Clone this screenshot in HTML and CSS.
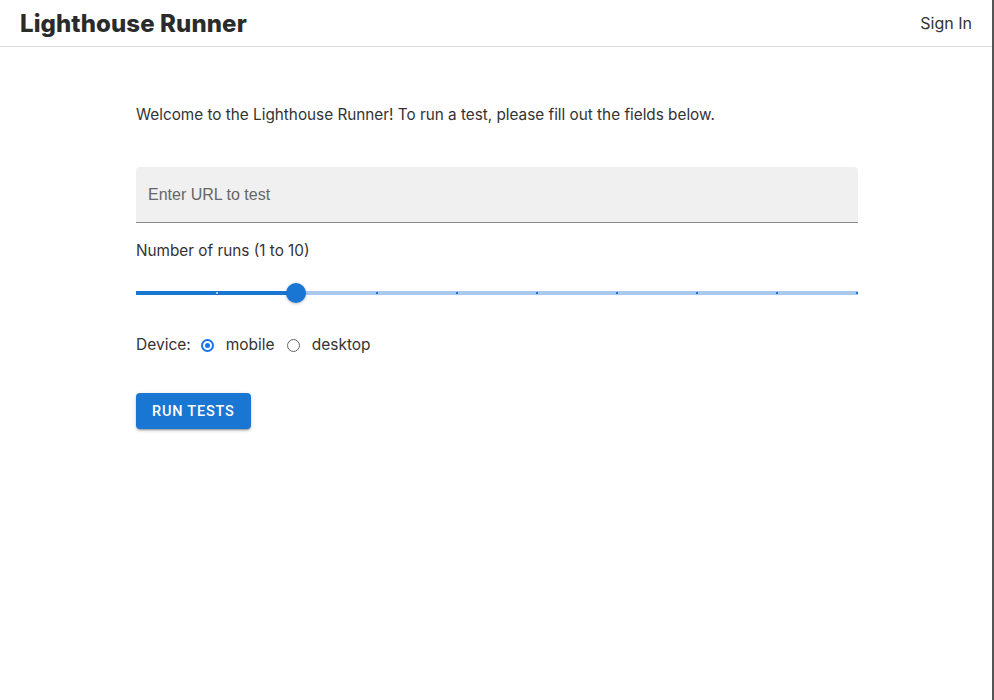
FILE: index.html
```html
<!DOCTYPE html>
<html lang="en">
<head>
<meta charset="utf-8">
<title>Lighthouse Runner</title>
<link rel="stylesheet" href="styles.css">
</head>
<body>
<div class="frame">
  <header class="topbar">
    <h1 class="brand">Lighthouse Runner</h1>
    <a class="signin" href="#">Sign In</a>
  </header>
  <main class="content">
    <p class="intro">Welcome to the Lighthouse Runner! To run a test, please fill out the fields below.</p>
    <div class="field">
      <input class="url-input" type="text" placeholder="Enter URL to test">
    </div>
    <p class="label">Number of runs (1 to 10)</p>
    <div class="slider">
      <div class="rail"></div>
      <div class="track" style="width: 22.22%"></div>
      <div class="ticks">
        <span class="tick on"></span><span class="tick on"></span><span class="tick on"></span><span class="tick"></span><span class="tick"></span><span class="tick"></span><span class="tick"></span><span class="tick"></span><span class="tick"></span><span class="tick"></span>
      </div>
      <div class="thumb" style="left: 22.22%"></div>
    </div>
    <div class="device">
      <span class="device-label">Device:</span>
      <label class="radio"><span class="dot checked"></span>mobile</label>
      <label class="radio"><span class="dot"></span>desktop</label>
    </div>
    <button class="run" type="button">Run Tests</button>
  </main>
</div>
</body>
</html>
```
FILE: styles.css
```css
* { box-sizing: border-box; }
html, body { margin: 0; padding: 0; height: 100%; }
body {
  background: #fff;
  font-family: "Inter", "Lato", sans-serif;
  color: #333;
}
.frame {
  height: 100%;
  border-right: 2px solid #555;
}
.topbar {
  height: 47px;
  border-bottom: 1px solid #dedede;
  display: flex;
  align-items: center;
  justify-content: space-between;
  padding: 0 20px 0 20px;
}
.brand {
  margin: 0;
  font-size: 24px;
  font-weight: 800;
  letter-spacing: 0.1px;
  color: #2b2b2b;
}
.signin {
  font-size: 16px;
  color: #333;
  text-decoration: none;
}
.content {
  width: 722px;
  margin-left: 136px;
  padding-top: 58px;
}
.intro {
  margin: 0;
  font-size: 15.3px;
  line-height: 20px;
  color: #333;
}
.field { margin-top: 42px; }
.url-input {
  width: 100%;
  height: 56px;
  border: none;
  border-bottom: 1px solid #8a8a8a;
  border-radius: 4px 4px 0 0;
  background: #f0f0f0;
  padding: 0 12px;
  font-family: "Liberation Sans", Arial, sans-serif;
  font-size: 16px;
  color: #333;
  outline: none;
}
.url-input::placeholder { color: #666; }
.label {
  margin: 18px 0 0;
  font-size: 15.3px;
  line-height: 20px;
  color: #333;
}
.slider {
  position: relative;
  height: 4px;
  margin-top: 30px;
}
.rail {
  position: absolute;
  inset: 0;
  background: #a9c9ee;
}
.track {
  position: absolute;
  left: 0; top: 0; bottom: 0;
  background: #1976d2;
}
.ticks {
  position: absolute;
  inset: 0;
  display: flex;
  justify-content: space-between;
  align-items: center;
}
.tick {
  width: 2px;
  height: 2px;
  background: #1976d2;
}
.tick.on { background: #a9c9ee; }
.tick:first-child { visibility: hidden; }
.thumb {
  position: absolute;
  top: 50%;
  width: 20px;
  height: 20px;
  margin: -10px 0 0 -10px;
  border-radius: 50%;
  background: #1976d2;
  box-shadow: 0 1px 3px rgba(0,0,0,0.25);
}
.device {
  display: flex;
  align-items: center;
  margin-top: 39px;
  font-size: 15.5px;
  line-height: 22px;
}
.device-label { margin-right: 10px; }
.radio {
  display: flex;
  align-items: center;
  margin-right: 12px;
}
.dot {
  width: 13px;
  height: 13px;
  border-radius: 50%;
  border: 1px solid #666;
  margin-right: 12px;
  position: relative;
}
.dot.checked { border: 2px solid #1a73e8; }
.dot.checked::after {
  content: "";
  position: absolute;
  left: 2px; top: 2px;
  width: 5px; height: 5px;
  border-radius: 50%;
  background: #1a73e8;
}
.run {
  margin-top: 37px;
  height: 36px;
  padding: 0 16px;
  border: none;
  border-radius: 4px;
  background: #1976d2;
  color: #fff;
  font-family: "Roboto", "Liberation Sans", sans-serif;
  font-size: 14.5px;
  font-weight: 500;
  letter-spacing: 0.8px;
  text-transform: uppercase;
  box-shadow: 0 3px 1px -2px rgba(0,0,0,0.2), 0 2px 2px 0 rgba(0,0,0,0.14), 0 1px 5px 0 rgba(0,0,0,0.12);
}
```
